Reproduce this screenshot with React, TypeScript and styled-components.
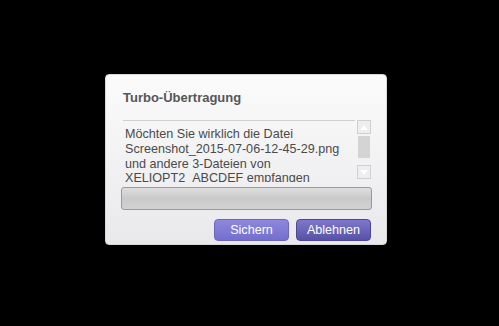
import React from "react";
import styled, { createGlobalStyle } from "styled-components";

const Global = createGlobalStyle`
  html, body { margin: 0; padding: 0; background: #000; }
  body { width: 499px; height: 326px; overflow: hidden; font-family: "Liberation Sans", Arial, sans-serif; }
`;

const Screen = styled.div`
  width: 499px;
  height: 326px;
  display: flex;
  align-items: flex-start;
  padding: 74px 0 0 105px;
  box-sizing: border-box;
`;

const Dialog = styled.div`
  width: 282px;
  height: 171px;
  box-sizing: border-box;
  border-radius: 4px;
  background: linear-gradient(#fbfbfb, #e9e9ec);
  border: 1px solid #d8d8d8;
  padding: 15px 15px 0 17px;
  display: flex;
  flex-direction: column;
`;

const Title = styled.div`
  font-weight: bold;
  font-size: 13px;
  color: #565656;
  height: 16px;
  line-height: 16px;
  margin-bottom: 14px;
`;

const MessageRow = styled.div`
  display: flex;
  gap: 2px;
  margin-right: -1px;
`;

const MessageBox = styled.div`
  width: 232px;
  height: 62px;
  overflow: hidden;
  border-top: 1px solid #cfcfcf;
  padding: 6px 0 0 2px;
  box-sizing: border-box;
  font-size: 12.6px;
  line-height: 14.8px;
  color: #4a4a4a;
  white-space: nowrap;
`;

const Scrollbar = styled.div`
  width: 14px;
  display: flex;
  flex-direction: column;
  gap: 2px;
`;

const ScrollBtn = styled.div`
  width: 14px;
  height: 14px;
  box-sizing: border-box;
  border: 1px solid #d0d0d0;
  background: #eeeeee;
  display: flex;
  align-items: center;
  justify-content: center;
`;

const Thumb = styled.div`
  width: 12px;
  margin-left: 1px;
  height: 22px;
  background: #d4d4d4;
  margin-bottom: 5px;
`;

const Progress = styled.div`
  margin-top: 5px;
  margin-left: -2px;
  width: 251px;
  height: 23px;
  box-sizing: border-box;
  border: 1px solid #9a9a9a;
  border-radius: 3px;
  background: linear-gradient(#dedede, #c9c9c9 50%, #d2d2d2);
`;

const Buttons = styled.div`
  display: flex;
  justify-content: flex-end;
  gap: 7px;
  margin-top: 9px;
`;

const Button = styled.div<{ $dark?: boolean }>`
  width: 75px;
  height: 22px;
  box-sizing: border-box;
  border-radius: 4px;
  border: 1px solid ${(p) => (p.$dark ? "#4b4796" : "#6b66c2")};
  background: ${(p) =>
    p.$dark
      ? "linear-gradient(#7d78cc, #5752a6)"
      : "linear-gradient(#8d88dc, #746fcc)"};
  color: #fff;
  font-size: 12.6px;
  display: flex;
  align-items: center;
  justify-content: center;
`;

const Arrow = ({ up }: { up?: boolean }) => (
  <svg width="8" height="5" viewBox="0 0 8 5">
    <polygon points={up ? "0,5 8,5 4,0" : "0,0 8,0 4,5"} fill="#fff" />
  </svg>
);

export default function App() {
  return (
    <>
      <Global />
      <Screen>
        <Dialog>
          <Title>Turbo-Übertragung</Title>
          <MessageRow>
            <MessageBox>
              Möchten Sie wirklich die Datei
              <br />
              Screenshot_2015-07-06-12-45-29.png
              <br />
              und andere 3-Dateien von
              <br />
              XELIOPT2_ABCDEF empfangen
            </MessageBox>
            <Scrollbar>
              <ScrollBtn>
                <Arrow up />
              </ScrollBtn>
              <Thumb />
              <ScrollBtn>
                <Arrow />
              </ScrollBtn>
            </Scrollbar>
          </MessageRow>
          <Progress />
          <Buttons>
            <Button>Sichern</Button>
            <Button $dark>Ablehnen</Button>
          </Buttons>
        </Dialog>
      </Screen>
    </>
  );
}
